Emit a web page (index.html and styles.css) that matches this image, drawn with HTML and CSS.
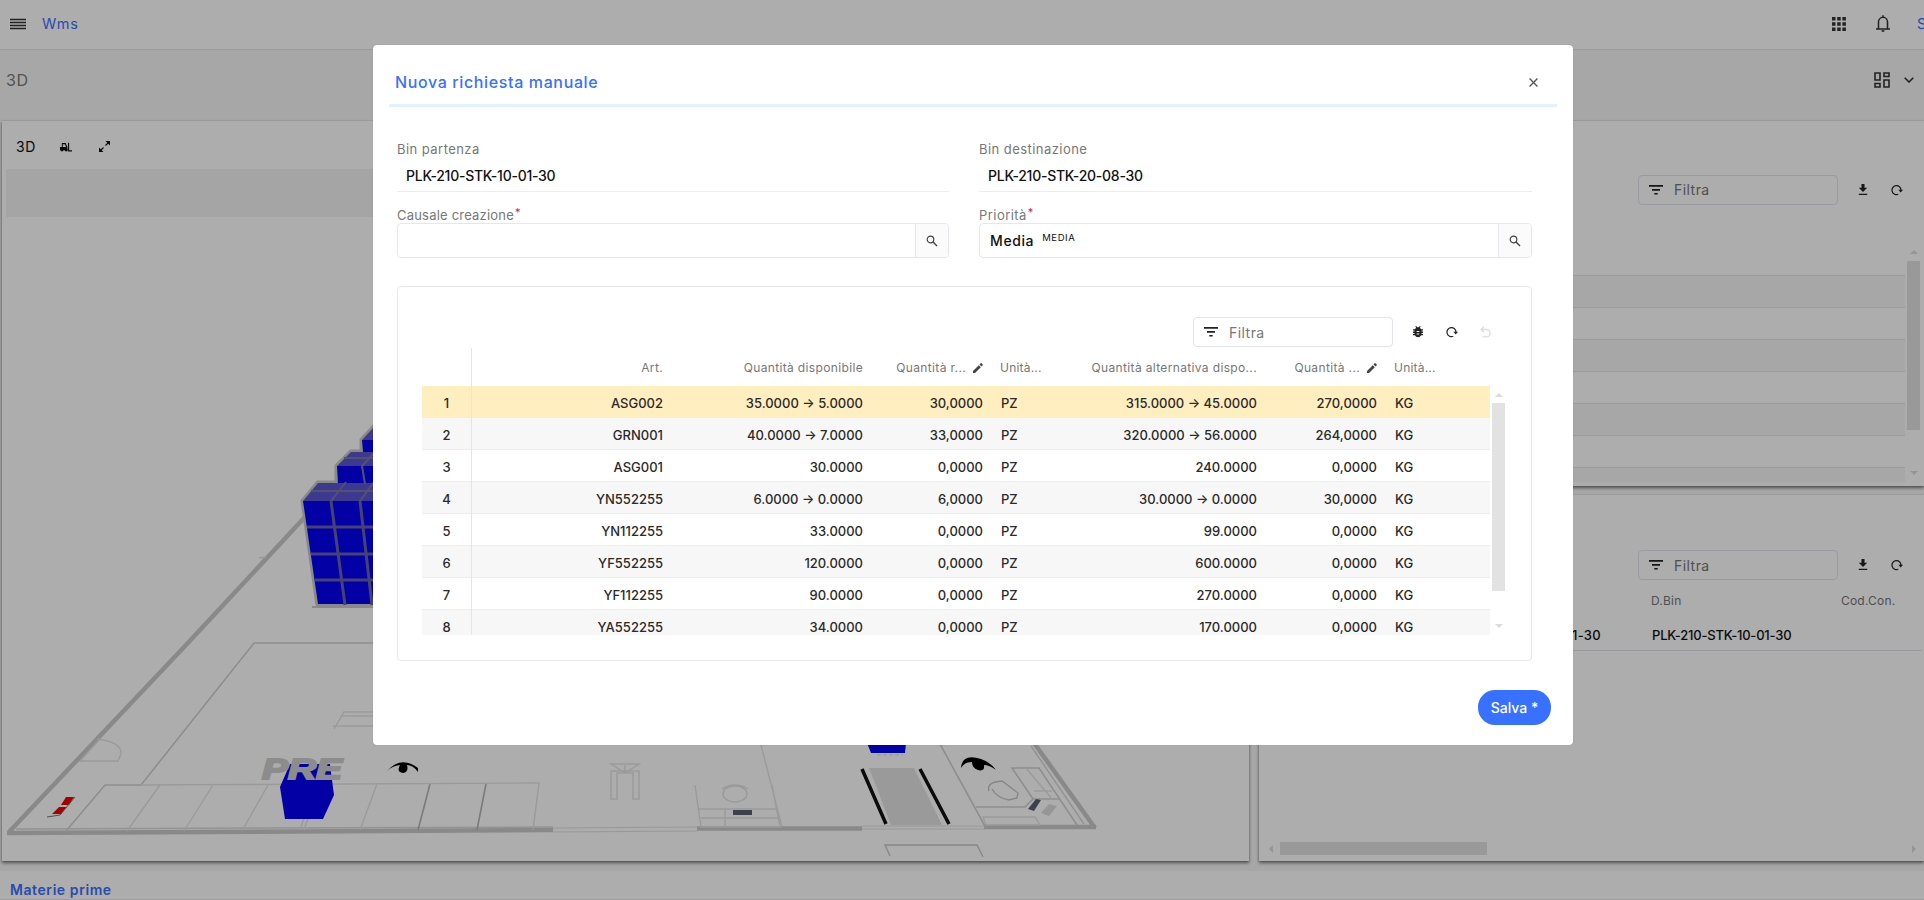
FILE: index.html
```html
<!DOCTYPE html>
<html lang="it">
<head>
<meta charset="utf-8">
<title>Wms</title>
<link rel="stylesheet" href="styles.css">
</head>
<body>
<svg class="defs" width="0" height="0">
  <symbol id="i-filter" viewBox="0 0 14 10"><path d="M0 0h14v1.8H0zM3 4h8v1.7H3zM5.300 8h3.400v1.600H5.300z"/></symbol>
  <symbol id="i-refresh" viewBox="0 0 12 12"><path d="M7.300 10.300A4.500 4.500 0 1 1 10 6.200" fill="none" stroke="currentColor" stroke-width="1.200"/><path d="M7.400 5.700h4.600L9.700 8.500z"/></symbol>
  <symbol id="i-download" viewBox="0 0 10 12"><path d="M3.500 0h3v3.800h2.700L5 8 .8 3.800h2.700zM.8 9.800h8.400v1.300H.8z"/></symbol>
  <symbol id="i-search" viewBox="0 0 12 12"><circle cx="4.500" cy="4.500" r="3.300" fill="none" stroke="currentColor" stroke-width="1.200"/><path d="M7 7l4 4" stroke="currentColor" stroke-width="1.500"/></symbol>
  <symbol id="i-pencil" viewBox="0 0 10 10"><path d="M0 8l5.800-5.800 2 2L2 10H0zM6.500 1.500L7.700.3q.4-.4.800 0l1.200 1.200q.4.400 0 .8L8.500 3.500z"/></symbol>
</svg>
<div class="page">
  <header class="topbar">
    <svg class="ic-menu" viewBox="0 0 16 12"><path d="M0 1.500h16M0 4.500h16M0 7.500h16M0 10.500h16" stroke="currentColor" stroke-width="1.300"/></svg>
    <span class="brand">Wms</span>
    <svg class="ic-apps" viewBox="0 0 14 14"><path d="M0 0h3.500v3.500H0zM5.200 0h3.500v3.500H5.200zM10.400 0h3.500v3.500h-3.500zM0 5.200h3.500v3.500H0zM5.200 5.200h3.500v3.500H5.200zM10.400 5.200h3.500v3.500h-3.500zM0 10.400h3.500v3.500H0zM5.200 10.400h3.500v3.500H5.200zM10.400 10.400h3.500v3.500h-3.500z"/></svg>
    <svg class="ic-bell" viewBox="0 0 14 17"><path d="M0 14h14M2.500 14V7a4.500 4.700 0 0 1 9 0v7M7 .3v2" fill="none" stroke="currentColor" stroke-width="1.500"/><path d="M5.300 15.200h3.400Q8.500 17 7 17t-1.700-1.800z"/></svg>
    <span class="user">S</span>
  </header>
  <div class="titlebar">
    <span class="page-title">3D</span>
    <svg class="ic-layout" viewBox="0 0 16 16"><path d="M1 1h5v7H1zM10 1h5v3.500h-5zM10 8h5v7h-5zM1 11.500h5V15H1z" fill="none" stroke="currentColor" stroke-width="1.600"/></svg>
    <svg class="ic-chev" viewBox="0 0 10 6"><path d="M.7.700L5 5 9.300.7" fill="none" stroke="currentColor" stroke-width="1.600"/></svg>
  </div>
  <main class="panels">
    <section class="card card-3d">
      <div class="card-head">
        <span>3D</span>
        <svg class="ic-lift" viewBox="0 0 13 10"><path d="M0 8.500V5h2V.7h4.200L8 5v3.500zM3 1.900V5h3.500L5.500 1.900z" fill-rule="evenodd"/><circle cx="2.200" cy="8.200" r="1.600"/><circle cx="6.700" cy="8.200" r="1.600"/><path d="M9.300.5v8.700H13" fill="none" stroke="currentColor" stroke-width="1.200"/></svg>
        <svg class="ic-expand" viewBox="0 0 11 11"><path d="M6.500 0H11v4.500zM0 6.500V11h4.500z"/><path d="M9.500 1.500L6.500 4.500M1.500 9.500l3-3" stroke="currentColor" stroke-width="1.200"/></svg>
      </div>
      <div class="band"></div>
      <svg class="scene" viewBox="2 217 1247 644">
        <g stroke="#cbcbcb" stroke-width="4.500">
          <path d="M305 517L186 645 9 832"/>
          <path d="M7 833L553 830M697 828.500H862M984 827H1096M1034 743L1095 828"/>
        </g>
        <path d="M16 829L553 827M1031 746L1084 824" stroke="#d9d9d9" stroke-width="1.500"/>
        <path d="M553 828l144-1M553 832l144-1M862 826h122M862 829h122" stroke="#e0e0e0"/>
        <g stroke="#d2d2d2" stroke-width="1.600">
          <path d="M373 643H254L141 785H105L66 831"/>
          <path d="M430 784l-12 46M486 784l-9 46" stroke="#b5b5b5"/>
          <path d="M940 744l46 84M976 807h49l8-8-21-31h27l38 57M1033 799h26"/>
        </g>
        <g stroke="#e3e3e3" stroke-width="1.400">
          <path d="M141 785l398-2-6 47M160 785l-33 46M213 785l-29 46M268 785l-26 46M306 812l-6 18M310 812l-6 18M377 784l-17 46"/>
          <path d="M97 739q25 3 24 15l-3 7H80l20-22"/>
          <path d="M373 712h-29l-10 17M373 726h-40M373 716h-31"/>
          <path d="M611 764h28l-14 9zM611 799v-28h28v28h-6v-26h-16v26zM625 773v-8"/>
          <path d="M761 745l21 82M695 785l6 42h79l-8-42M699 809h79M725 809v18M701 818h78"/>
          <ellipse cx="735" cy="794" rx="12" ry="8"/>
          <path d="M722 789q13-8 26 0" />
          <path d="M259 558l7-1M983 817h52l5 8h-54zM1026 768l26 31M1034 791h18" />
          <path d="M890 856l-5-11h92l6 12" stroke="#c8c8c8"/>
        </g>
        <path d="M989 791q-2-7 6-9l7-1 16 12-1 5-8 2q-12-2-17-11" stroke="#c6c6c6" stroke-width="1.400"/>
        <g>
          <path d="M303 501l15-18h19v-17l14-14h11v-12l12-13v178h-56z" stroke="#ccccc4" stroke-width="5"/>
          <path d="M362 440l12-13v13z" fill="#5a55d2"/><path d="M362 440h12v12h-11z" fill="#0500f5"/>
          <path d="M337 466l14-14h23v14z" fill="#5a55d2"/><path d="M337 466h37v18h-36z" fill="#0500f5"/>
          <path d="M303 501l15-18h56v18z" fill="#5a55d2"/>
          <path d="M303 501h71v103h-56z" fill="#0500f5"/>
          <path d="M344 458h30M362 466l3 18M362 466l12-13M311 491h63M331 501l15-19M360 501l14-19" stroke="#7a79a5" stroke-width="2"/>
          <path d="M307 527h67M311 554h63M315 580h59M331 501l14 104M360 501l12 104" stroke="#6564a8" stroke-width="3"/>
          <path d="M312 607h62" stroke="#ccc" stroke-width="2"/>
        </g>
        <path d="M290 764h40l2 16 2 15-11 24h-38l-5-32z" fill="#0500f5"/>
        <text class="scene-label" x="262" y="779" textLength="80" lengthAdjust="spacingAndGlyphs">PRE</text>
        <path d="M66 797h8l-5 8H61zM59 807h8l-6 7h-9z" fill="#f60000"/>
        <path d="M75 797L60 815l-13 2" stroke="#777"/>
        <path d="M387 771q14-16 31-3v4q-5-7-11-7 2 7-4 8-7-1-3-8-8 1-13 6z" fill="#000"/>
        <path d="M961 768q1-15 20-9 9 3 15 11-7-5-12-5 1 7-6 5-6-2-6-8-8 0-11 6z" fill="#000"/>
        <path d="M867 743h39l-1 10h-34z" fill="#0500f5"/>
        <path d="M869 768h45l28 57h-51z" fill="#e4e4e4"/>
        <path d="M862 769l24 55M920 769l29 55" stroke="#111" stroke-width="3.500"/>
        <path d="M733 810h19v5h-19z" fill="#596070"/>
        <path d="M1028 809l8-10 5 1-7 11z" fill="#596070"/>
        <path d="M1041 813l8-9 8 2-8 10z" fill="#ddd"/>
        <path d="M877 755h26" stroke="#ddd" stroke-dasharray="4 2"/>
      </svg>
    </section>
    <div class="right">
      <section class="card card-top">
        <div class="tools">
          <label class="filter"><svg class="ic-f"><use href="#i-filter"/></svg><span>Filtra</span></label>
          <svg class="ic-d"><use href="#i-download"/></svg><svg class="ic-r"><use href="#i-refresh"/></svg>
        </div>
        <div class="list">
          <div class="rows"><i></i><i></i><i></i><i></i><i></i><i></i><i></i></div>
          <div class="vbar"><b class="up"></b><b class="thumb"></b><b class="down"></b></div>
        </div>
      </section>
      <section class="card card-bottom">
        <div class="tools">
          <label class="filter"><svg class="ic-f"><use href="#i-filter"/></svg><span>Filtra</span></label>
          <svg class="ic-d"><use href="#i-download"/></svg><svg class="ic-r"><use href="#i-refresh"/></svg>
        </div>
        <div class="bins bins-head"><span></span><span>D.Bin</span><span>Cod.Con.</span></div>
        <div class="bins bins-row"><span>PLK-210-STK-10-01-30</span><span>PLK-210-STK-10-01-30</span><span></span></div>
        <div class="hbar"><b class="left-arrow"></b><b class="hthumb"></b><b class="right-arrow"></b></div>
      </section>
    </div>
  </main>
  <footer class="footer">Materie prime</footer>
</div>

<div class="backdrop">
  <div class="modal">
    <div class="modal-head"><h1>Nuova richiesta manuale</h1><svg class="ic-x" viewBox="0 0 8 8"><path d="M.5.500l7 7M7.500.5l-7 7" stroke="currentColor" stroke-width="1.200"/></svg></div>
    <div class="form">
      <div class="field"><div class="lbl">Bin partenza</div><div class="ro">PLK-210-STK-10-01-30</div></div>
      <div class="field"><div class="lbl">Bin destinazione</div><div class="ro">PLK-210-STK-20-08-30</div></div>
      <div class="field"><div class="lbl req">Causale creazione<em>*</em></div><div class="inp"><div class="val"></div><div class="btn"><svg><use href="#i-search"/></svg></div></div></div>
      <div class="field"><div class="lbl">Priorità<em>*</em></div><div class="inp"><div class="val">Media<small>MEDIA</small></div><div class="btn"><svg><use href="#i-search"/></svg></div></div></div>
    </div>
    <div class="box">
      <div class="box-tools">
        <label class="filter"><svg class="ic-f"><use href="#i-filter"/></svg><span>Filtra</span></label>
        <svg class="ic-bug" viewBox="0 0 10 12"><path d="M2 3.300Q2.600 2 3.300 1.800L2.300.8l.8-.8 1.300 1.300h1.200L6.900 0l.8.800-1 1Q7.500 2.200 8 3.300h2v1.300H8.500v1H10v1.300H8.500v1H10v1.300H8.100Q7.200 11.300 5 11.300T1.900 9.200H0V7.900h1.500v-1H0V5.600h1.500v-1H0V3.300zM3.700 5v1h2.600V5zM3.700 7.500v1h2.600v-1z" fill-rule="evenodd"/></svg>
        <svg class="ic-r"><use href="#i-refresh"/></svg>
        <svg class="ic-undo" viewBox="0 0 11 12"><path d="M4 .8L1 3.500l3 2.800M1 3.500h5.500a3.600 3.600 0 0 1 0 7.300H2.500" fill="none" stroke="currentColor" stroke-width="1.300"/></svg>
      </div>
      <div class="grid-wrap">
        <div class="grid">
          <div class="gr gh"><span></span><span>Art.</span><span>Quantità disponibile</span><span class="ed">Quantità r...<svg><use href="#i-pencil"/></svg></span><span>Unità...</span><span>Quantità alternativa dispo...</span><span class="ed">Quantità ...<svg><use href="#i-pencil"/></svg></span><span>Unità...</span></div>
          <div class="gr sel"><span>1</span><span>ASG002</span><span>35.0000 → 5.0000</span><span>30,0000</span><span>PZ</span><span>315.0000 → 45.0000</span><span>270,0000</span><span>KG</span></div>
          <div class="gr alt"><span>2</span><span>GRN001</span><span>40.0000 → 7.0000</span><span>33,0000</span><span>PZ</span><span>320.0000 → 56.0000</span><span>264,0000</span><span>KG</span></div>
          <div class="gr"><span>3</span><span>ASG001</span><span>30.0000</span><span>0,0000</span><span>PZ</span><span>240.0000</span><span>0,0000</span><span>KG</span></div>
          <div class="gr alt"><span>4</span><span>YN552255</span><span>6.0000 → 0.0000</span><span>6,0000</span><span>PZ</span><span>30.0000 → 0.0000</span><span>30,0000</span><span>KG</span></div>
          <div class="gr"><span>5</span><span>YN112255</span><span>33.0000</span><span>0,0000</span><span>PZ</span><span>99.0000</span><span>0,0000</span><span>KG</span></div>
          <div class="gr alt"><span>6</span><span>YF552255</span><span>120.0000</span><span>0,0000</span><span>PZ</span><span>600.0000</span><span>0,0000</span><span>KG</span></div>
          <div class="gr"><span>7</span><span>YF112255</span><span>90.0000</span><span>0,0000</span><span>PZ</span><span>270.0000</span><span>0,0000</span><span>KG</span></div>
          <div class="gr alt last"><span>8</span><span>YA552255</span><span>34.0000</span><span>0,0000</span><span>PZ</span><span>170.0000</span><span>0,0000</span><span>KG</span></div>
        </div>
        <div class="vbar modal-bar"><b class="up"></b><b class="thumb"></b><b class="down"></b></div>
      </div>
    </div>
    <div class="actions"><button class="save">Salva *</button></div>
  </div>
</div>
</body>
</html>
```
FILE: styles.css
```css
* { box-sizing: border-box; }
body { margin: 0; width: 1924px; height: 900px; overflow: hidden; font-family: Inter, "Open Sans", sans-serif; font-size: 14px; color: #111; background: #fff; }
svg { display: block; fill: currentColor; flex: none; }
.defs { position: absolute; }
.page { height: 900px; display: flex; flex-direction: column; background: #f6f6f6; }
.topbar { height: 50px; flex: none; display: flex; align-items: center; padding: 0 0 2px 10px; background: #fff; border-bottom: 1px solid #e3e3e6; color: #333; overflow: hidden; }
.ic-menu { width: 16px; height: 12px; }
.brand { margin-left: 16px; color: #3871ff; font-size: 14.500px; letter-spacing: .9px; }
.ic-apps { width: 14px; height: 14px; margin-left: auto; }
.ic-bell { width: 14px; height: 17px; margin-left: 30px; }
.user { color: #3871ff; margin-left: 27px; width: 7px; font-size: 14.500px; }
.titlebar { height: 71px; flex: none; display: flex; align-items: center; padding: 0 10px 11px 6px; color: #333; }
.page-title { font-size: 16px; letter-spacing: .6px; color: #7b7b7b; }
.ic-layout { width: 16px; height: 16px; margin-left: auto; }
.ic-chev { width: 10px; height: 6px; margin-left: 14px; }
.panels { flex: 1; display: flex; gap: 10px; padding-left: 2px; min-height: 0; height: 740px; }
.card { background: #fff; box-shadow: 0 2px 3px rgba(0,0,0,.5), 0 0 2px rgba(0,0,0,.15); }
.card-3d { width: 1247px; height: 740px; }
.card-head { height: 48px; display: flex; align-items: center; padding: 3px 0 0 14px; }
.card-head span { width: 44px; padding-bottom: 1px; letter-spacing: .7px; }
.ic-lift { width: 12px; height: 10px; }
.ic-expand { width: 11px; height: 11px; margin-left: 27px; }
.band { height: 48px; margin: 0 4px; background: #f4f4f4; }
.scene { width: 1247px; height: 644px; fill: none; }
.scene-label { font: italic bold 30px "Liberation Sans", sans-serif; fill: #cfcfcf; stroke: #cfcfcf; stroke-width: 2; }
.right { flex: 1; display: flex; flex-direction: column; gap: 9px; }
.card-top { height: 365px; padding-top: 54px; }
.card-bottom { height: 366px; padding-top: 55px; display: flex; flex-direction: column; }
.tools, .box-tools { display: flex; align-items: center; }
.tools { padding-left: 379px; color: #222; }
.filter { width: 200px; height: 30px; border: 1px solid #e3e3f0; border-radius: 4px; display: flex; align-items: center; color: #777; background: #fff; padding-left: 10px; gap: 11px; letter-spacing: .45px; }
.ic-f { width: 14px; height: 10px; color: #222; }
.ic-d { width: 10px; height: 12px; margin-left: 20px; }
.ic-r { width: 12px; height: 12px; }
.tools .ic-r { margin-left: 23px; }
.card-top .filter span { padding-bottom: 1px; }
.list { display: flex; margin-top: 40px; height: 237px; }
.rows { width: 646px; padding-top: 30px; overflow: hidden; display: flex; flex-direction: column; }
.rows i { height: 32px; flex: none; border-top: 1px solid #e3e3ea; }
.rows i:nth-child(odd) { background: #f6f6f6; }
.rows i:last-child { height: 15px; }
.vbar { width: 13px; margin-left: 2px; display: flex; flex-direction: column; align-items: center; padding-top: 5px; }
.up, .down { border: 4px solid transparent; height: 0; width: 0; }
.up { border-bottom-color: #dcdcdc; border-top: 0; }
.down { border-top-color: #dcdcdc; border-bottom: 0; margin-top: auto; }
.thumb { width: 13px; height: 169px; background: #e2e2e2; margin-top: 7px; }
.card-top .down { margin-bottom: 7px; }
.bins { display: grid; grid-template-columns: 392px 190px 80px; }
.bins-head { height: 41px; align-items: center; font-size: 12px; color: #777; letter-spacing: .2px; }
.bins-row { height: 30px; padding-bottom: 1px; font-size: 13px; font-weight: 500; border-bottom: 1px solid #e3e3ee; align-items: center; margin-right: 2px; letter-spacing: -.2px; }
.bins-row span:first-child { text-align: right; padding-right: 50px; letter-spacing: .3px; }
.bins-row span:nth-child(2) { padding-left: 1px; }
.hbar { margin-top: auto; margin-bottom: 6px; display: flex; align-items: center; height: 13px; padding: 0 8px 0 10px; }
.left-arrow, .right-arrow { border: 4px solid transparent; width: 0; height: 0; }
.left-arrow { border-right-color: #dcdcdc; border-left: 0; }
.right-arrow { border-left-color: #dcdcdc; border-right: 0; margin-left: auto; }
.hthumb { width: 207px; height: 13px; margin-left: 7px; background: #e2e2e2; }
.footer { height: 29px; flex: none; background: #fff; color: #3871ff; font-weight: 600; padding: 10px 0 0 10px; border-bottom: 1px solid #eee; letter-spacing: .58px; }
.panels + .footer { margin-top: 10px; }

.backdrop { position: absolute; top: 0; left: 0; width: 1924px; height: 900px; background: rgba(0,0,0,.32); padding: 45px 0 0 373px; }
.modal { width: 1200px; height: 700px; background: #fff; border-radius: 4px; padding: 0 16px; box-shadow: 0 0 1px rgba(0,0,0,.3); }
.modal-head { height: 62px; border-bottom: 3px solid #e4f0fd; display: flex; align-items: center; justify-content: space-between; padding: 15px 19px 0 6px; color: #555; }
h1 { margin: 0; font-size: 16px; font-weight: 500; color: #3871ff; letter-spacing: .63px; line-height: 20px; }
.ic-x { width: 9px; height: 9px; }
.form { display: grid; grid-template-columns: 552px 553px; column-gap: 30px; padding: 33px 0 0 8px; }
.lbl { height: 18px; line-height: 18px; font-size: 13px; color: #777; letter-spacing: .45px; }
.lbl.req { letter-spacing: .2px; }
.lbl em { color: #e02040; font-style: normal; font-size: 11px; position: relative; top: -4px; left: 1px; line-height: 10px; }
.ro { height: 34px; line-height: 35px; padding-left: 9px; border-bottom: 1px solid #ececf5; font-weight: 500; margin-bottom: 14px; letter-spacing: -.25px; }
.inp { height: 35px; display: flex; border: 1px solid #e6e6f2; border-radius: 4px; overflow: hidden; margin-top: -1px; }
.val { flex: 1; padding-left: 10px; line-height: 33px; font-weight: 500; letter-spacing: .6px; }
.val small { font-size: 9.500px; font-weight: 400; position: relative; top: -5px; margin-left: 8px; }
.btn { width: 33px; border-left: 1px solid #e6e6f2; background: #fbfbfb; display: flex; align-items: center; justify-content: center; color: #444; }
.btn svg { width: 12px; height: 12px; }
.box { margin: 28px 0 0 8px; width: 1135px; height: 375px; border: 1px solid #e6e6f2; border-radius: 4px; padding: 30px 0 0 24px; }
.box-tools { padding-left: 771px; height: 30px; color: #222; }
.box-tools .ic-bug { width: 10px; height: 12px; margin-left: 20px; }
.box-tools .ic-r { margin-left: 23px; }
.ic-undo { width: 11px; height: 12px; margin-left: 22px; color: #ddd; }
.grid-wrap { display: flex; margin-top: 1px; height: 287px; }
.grid { width: 1068px; height: 287px; overflow: hidden; }
.gr { display: grid; grid-template-columns: 50px 191px 200px 120px 98px 176px 120px 113px; height: 32px; line-height: 34px; border-bottom: 1px solid #ececf2; font-size: 13px; font-weight: 500; color: #2a2a2a; }
.gr > span { text-align: right; white-space: nowrap; }
.gr > span:first-child { text-align: center; border-right: 1px solid #e3e3ef; }
.gr > span:nth-child(5), .gr > span:nth-child(8) { text-align: left; padding-left: 18px; }
.gr.gh { height: 38px; line-height: 39px; border-bottom: 0; font-size: 12px; font-weight: 400; color: #777; letter-spacing: .35px; }
.gh .ed { display: flex; align-items: center; justify-content: flex-end; gap: 7px; }
.gh svg { width: 10px; height: 10px; color: #444; }
.gr.gh > span:nth-child(5), .gr.gh > span:nth-child(8) { padding-left: 17px; letter-spacing: .2px; }
.sel { background: #ffeec0; }
.alt { background: #f7f7f7; }
.modal-bar { padding-top: 45px; }
.modal-bar .thumb { height: 188px; margin-top: 6px; }
.modal-bar .down { margin-bottom: 7px; }
.actions { display: flex; justify-content: flex-end; padding: 29px 6px 0 0; }
.save { width: 73px; height: 35px; border: 0; border-radius: 17px; background: #3871ff; color: #fff; font: 500 14px Inter, sans-serif; padding: 0; }
```
